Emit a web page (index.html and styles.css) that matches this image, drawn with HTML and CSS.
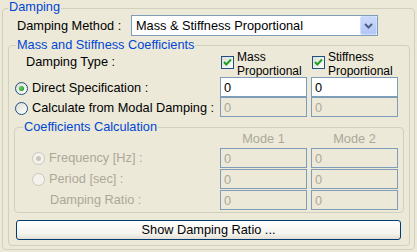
FILE: index.html
```html
<!DOCTYPE html>
<html lang="en">
<head>
    <meta charset="UTF-8">
    <title>Damping</title>
    <link rel="stylesheet" href="styles.css">
</head>
<body>
    <fieldset class="group outer">
        <legend>Damping</legend>
        <div class="method-row">
            <span class="method-label">Damping Method :</span>
            <div class="combo">
                <span class="combo-text">Mass &amp; Stiffness Proportional</span>
                <span class="combo-btn">
                    <svg width="9" height="6" viewBox="0 0 9 6"><path d="M1 1 L4.5 4.5 L8 1" fill="none" stroke="#4d6185" stroke-width="2"/></svg>
                </span>
            </div>
        </div>

        <fieldset class="group coeffs">
            <legend>Mass and Stiffness Coefficients</legend>
            <div class="coef-grid">
                <div class="type-label">Damping Type :</div>
                <label class="check">
                    <span class="box"><svg width="11" height="11" viewBox="0 0 11 11"><path d="M2 5 L4.3 7.5 L9 2.5" fill="none" stroke="#21a121" stroke-width="2"/></svg></span>
                    <span class="check-text">Mass<br>Proportional</span>
                </label>
                <label class="check">
                    <span class="box"><svg width="11" height="11" viewBox="0 0 11 11"><path d="M2 5 L4.3 7.5 L9 2.5" fill="none" stroke="#21a121" stroke-width="2"/></svg></span>
                    <span class="check-text">Stiffness<br>Proportional</span>
                </label>

                <label class="radio main"><span class="dot on"><span></span></span>Direct Specification :</label>
                <input class="field" type="text" value="0">
                <input class="field" type="text" value="0">

                <label class="radio main"><span class="dot"></span>Calculate from Modal Damping :</label>
                <input class="field" type="text" value="0" disabled>
                <input class="field" type="text" value="0" disabled>
            </div>

            <fieldset class="group calc">
                <legend>Coefficients Calculation</legend>
                <div class="calc-grid">
                    <div></div>
                    <div class="mode">Mode 1</div>
                    <div class="mode">Mode 2</div>

                    <label class="radio sub off"><span class="dot on"><span></span></span>Frequency [Hz] :</label>
                    <input class="field" type="text" value="0" disabled>
                    <input class="field" type="text" value="0" disabled>

                    <label class="radio sub off"><span class="dot"></span>Period [sec] :</label>
                    <input class="field" type="text" value="0" disabled>
                    <input class="field" type="text" value="0" disabled>

                    <div class="ratio-label">Damping Ratio :</div>
                    <input class="field" type="text" value="0" disabled>
                    <input class="field" type="text" value="0" disabled>
                </div>
            </fieldset>

            <button class="show-btn">Show Damping Ratio ...</button>
        </fieldset>
    </fieldset>
</body>
</html>
```

FILE: styles.css
```css
body {
    margin: 0;
    background-color: #ece9d8;
    font-family: "Liberation Sans", Arial, sans-serif;
    font-size: 12.75px;
    line-height: 14px;
    color: #000;
}

.group {
    margin: 0;
    border: 1px solid #d0d0bf;
    border-radius: 4px;
    min-width: 0;
}

.group > legend {
    padding: 0 1px;
    color: #0046d5;
    line-height: 14px;
}

.outer {
    margin: 0 2px;
    padding: 0 4px 3px 5px;
}

.outer > legend {
    padding-bottom: 2px;
}

.method-row {
    display: flex;
    align-items: center;
    height: 21px;
    margin-top: -1px;
}

.method-label {
    width: 114px;
    margin-left: 9px;
}

.combo {
    display: flex;
    align-items: center;
    width: 247px;
    height: 21px;
    box-sizing: border-box;
    border: 1px solid #7f9db9;
    background-color: #fff;
}

.combo-text {
    flex: 1;
    padding-left: 4px;
}

.combo-btn {
    display: flex;
    align-items: center;
    justify-content: center;
    width: 17px;
    height: 19px;
    box-sizing: border-box;
    border: 1px solid #d2defd;
    border-radius: 2px;
    background: linear-gradient(#cad9fd, #b2c7f6);
}

.coeffs {
    margin-top: 2px;
    padding: 0 5px 5px 5px;
}

.coeffs > legend {
    margin-left: 2px;
}

.coef-grid {
    display: grid;
    grid-template-columns: 202px 87px 87px;
    grid-template-rows: 24px 20px 20px;
    column-gap: 4px;
    padding-top: 1px;
}

.type-label {
    margin-left: 12px;
    padding-top: 2px;
}

.check {
    display: flex;
    align-items: flex-start;
    gap: 3px;
    margin-left: 1px;
}

.check-text {
    margin-top: -2px;
    font-size: 12px;
    line-height: 13.5px;
}

.box {
    display: flex;
    align-items: center;
    justify-content: center;
    width: 13px;
    height: 13px;
    margin-top: 3px;
    box-sizing: border-box;
    border: 1px solid #1c5180;
    background: linear-gradient(135deg, #dcdcd7, #fff);
}

.radio {
    display: flex;
    align-items: center;
    gap: 4px;
    padding-top: 2px;
}

.radio.main {
    margin-left: 1px;
}

.dot {
    display: flex;
    align-items: center;
    justify-content: center;
    width: 13px;
    height: 13px;
    box-sizing: border-box;
    border: 1px solid #1c5180;
    border-radius: 50%;
    background: linear-gradient(135deg, #dcdcd7, #fff);
}

.dot span {
    width: 5px;
    height: 5px;
    border-radius: 50%;
    background: radial-gradient(circle at 40% 40%, #63d85f, #21a121 70%);
}

.field {
    width: 87px;
    height: 20px;
    margin: 0;
    padding: 0 3px;
    box-sizing: border-box;
    border: 1px solid #7f9db9;
    background-color: #fff;
    font: inherit;
    color: #000;
    outline: none;
}

.field:disabled {
    background-color: #ece9d8;
    color: #aca899;
}

.calc {
    margin-top: 3px;
    padding: 0 0 1px 0;
}

.calc > legend {
    margin-left: 8px;
}

.calc-grid {
    display: grid;
    grid-template-columns: 201px 87px 87px;
    grid-template-rows: 16px 21px 21px 21px;
    column-gap: 4px;
    margin-top: -2px;
    color: #aca899;
}

.mode {
    text-align: center;
}

.radio.sub {
    margin-left: 17px;
    padding-top: 0;
    align-self: start;
    height: 20px;
}

.off .dot {
    border-color: #cac8bb;
    background: #f3f2ec;
}

.off .dot span {
    background: #cac8bb;
}

.ratio-label {
    margin-left: 35px;
    padding-top: 3px;
}

.show-btn {
    display: block;
    width: 385px;
    height: 20px;
    margin: 7px 0 0 2px;
    padding: 0;
    border: 1px solid #003c74;
    border-radius: 3px;
    background: linear-gradient(#ffffff, #f4f3ee 70%, #e2dfd5);
    font: inherit;
    color: #000;
}
```
